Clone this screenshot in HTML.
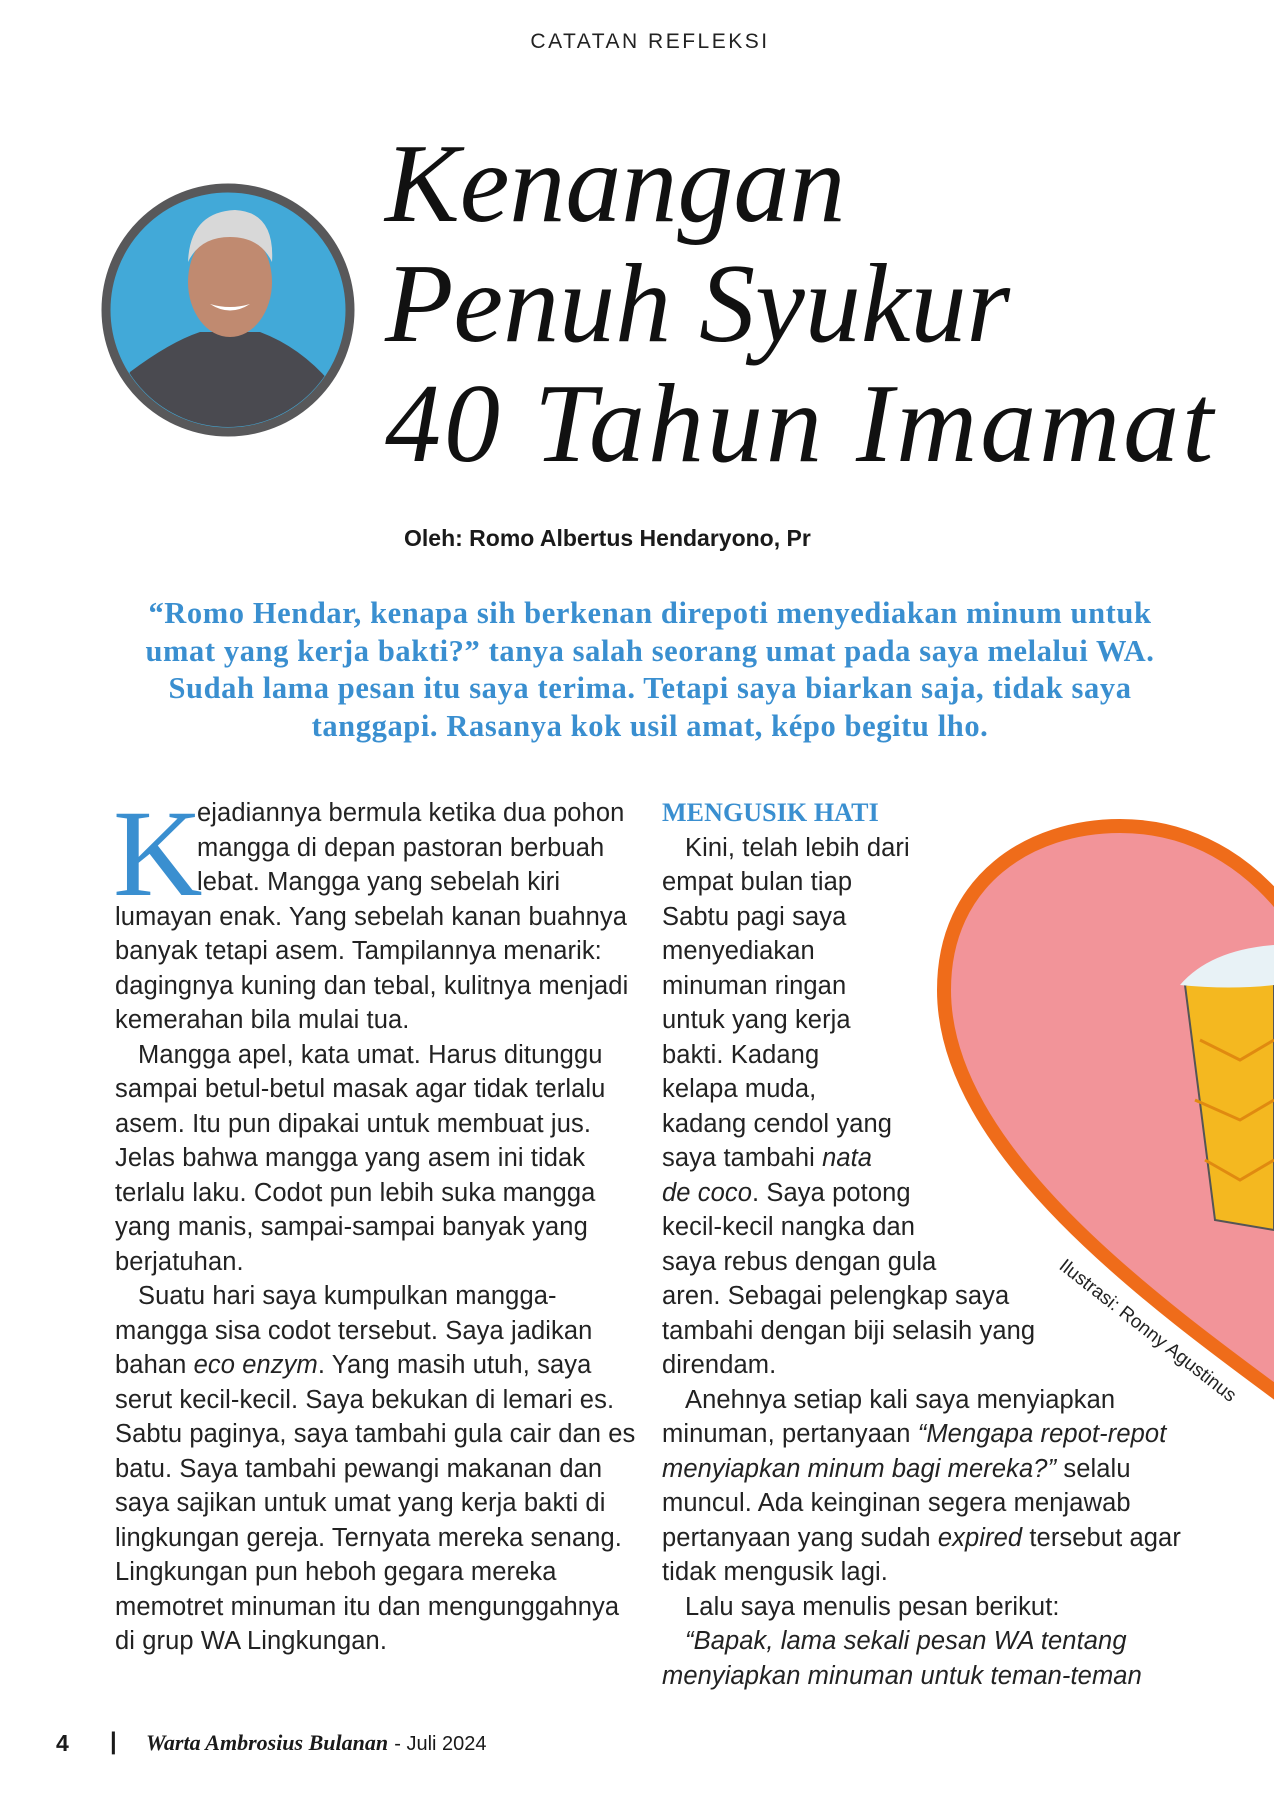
<!DOCTYPE html>
<html><head><meta charset="utf-8"><style>
*{margin:0;padding:0;box-sizing:border-box}
body{width:1274px;height:1800px;background:#fff;position:relative;overflow:hidden;font-family:"Liberation Sans",sans-serif;color:#1a1a1a}
.abs{position:absolute}
.hdr{top:30px;left:0;width:1300px;text-align:center;font-size:21px;letter-spacing:2.5px;color:#222}
.title{left:385px;font-family:"Liberation Serif",serif;font-style:italic;font-size:112px;line-height:1;color:#111;letter-spacing:0px;white-space:nowrap}
.by{top:525px;left:404px;font-size:23px;font-weight:bold}
.quote{top:595px;left:0;width:1300px;text-align:center;font-family:"Liberation Serif",serif;font-weight:bold;font-size:30.5px;letter-spacing:.6px;line-height:37.5px;color:#3a8fd0;white-space:nowrap}
.col{font-size:25.5px;letter-spacing:.1px;line-height:34.5px;color:#222;white-space:nowrap}
.in{padding-left:23px}
.dc{position:absolute;left:-2px;top:-4px;font-family:"Liberation Serif",serif;font-size:124px;line-height:1;color:#3a8fd0}
.h3{font-family:"Liberation Serif",serif;font-weight:bold;font-size:26px;color:#3a8fd0}
</style></head><body>
<div class="abs hdr">CATATAN REFLEKSI</div>

<svg class="abs" style="left:100px;top:182px" width="256" height="256">
<circle cx="128" cy="128" r="122" fill="#42a9d8" stroke="#58585a" stroke-width="9"/>
<clipPath id="c"><circle cx="128" cy="128" r="117"/></clipPath>
<g clip-path="url(#c)">
<path d="M10,256 L30,190 Q70,160 100,150 L160,150 Q200,165 230,200 L250,256Z" fill="#4a4a50"/>
<ellipse cx="130" cy="100" rx="42" ry="55" fill="#c08a70"/>
<path d="M88,80 Q90,30 135,28 Q175,30 172,80 Q160,55 130,55 Q100,55 88,80Z" fill="#d8d8d8"/>
<path d="M110,122 Q130,135 150,122 Q130,128 110,122Z" fill="#fff"/>
</g></svg>

<div class="abs title" style="top:128px">Kenangan</div>
<div class="abs title" style="top:248px">Penuh Syukur</div>
<div class="abs title" style="top:368px;letter-spacing:3px">40 Tahun Imamat</div>

<div class="abs by">Oleh: Romo Albertus Hendaryono, Pr</div>
<div class="abs quote">“Romo Hendar, kenapa sih berkenan direpoti menyediakan minum untuk<br>umat yang kerja bakti?” tanya salah seorang umat pada saya melalui WA.<br>Sudah lama pesan itu saya terima. Tetapi saya biarkan saja, tidak saya<br>tanggapi. Rasanya kok usil amat, képo begitu lho.</div>

<svg class="abs" style="left:0;top:0" width="1274" height="1800">
<path d="M1300,1410 C1150,1300 944,1150 944,990 C944,880 1030,826 1120,826 C1200,826 1260,870 1300,930Z" fill="#f29499" stroke="#ef6c1a" stroke-width="14"/>
<path d="M1185,985 L1274,965 L1274,1230 L1215,1220Z" fill="#f4b820" stroke="#555" stroke-width="2"/>
<path d="M1180,985 Q1210,950 1274,945 L1274,985 Q1230,990 1180,985Z" fill="#e8f2f6"/>
<path d="M1200,1040 L1240,1060 L1274,1040 M1195,1100 L1240,1120 L1274,1100 M1205,1160 L1240,1180 L1274,1160" stroke="#e08a10" stroke-width="3" fill="none"/>
<text x="1058" y="1268" transform="rotate(38 1058 1268)" font-family="Liberation Sans" font-size="19" fill="#222">Ilustrasi: Ronny Agustinus</text>
</svg>

<div class="abs col" style="left:115px;top:796px;width:520px">
<span class="dc">K</span>
<div style="padding-left:82px">ejadiannya bermula ketika dua pohon</div>
<div style="padding-left:82px">mangga di depan pastoran berbuah</div>
<div style="padding-left:82px">lebat. Mangga yang sebelah kiri</div>
<div>lumayan enak. Yang sebelah kanan buahnya</div>
<div>banyak tetapi asem. Tampilannya menarik:</div>
<div>dagingnya kuning dan tebal, kulitnya menjadi</div>
<div>kemerahan bila mulai tua.</div>
<div class="in">Mangga apel, kata umat. Harus ditunggu</div>
<div>sampai betul-betul masak agar tidak terlalu</div>
<div>asem. Itu pun dipakai untuk membuat jus.</div>
<div>Jelas bahwa mangga yang asem ini tidak</div>
<div>terlalu laku. Codot pun lebih suka mangga</div>
<div>yang manis, sampai-sampai banyak yang</div>
<div>berjatuhan.</div>
<div class="in">Suatu hari saya kumpulkan mangga-</div>
<div>mangga sisa codot tersebut. Saya jadikan</div>
<div>bahan <i>eco enzym</i>. Yang masih utuh, saya</div>
<div>serut kecil-kecil. Saya bekukan di lemari es.</div>
<div>Sabtu paginya, saya tambahi gula cair dan es</div>
<div>batu. Saya tambahi pewangi makanan dan</div>
<div>saya sajikan untuk umat yang kerja bakti di</div>
<div>lingkungan gereja. Ternyata mereka senang.</div>
<div>Lingkungan pun heboh gegara mereka</div>
<div>memotret minuman itu dan mengunggahnya</div>
<div>di grup WA Lingkungan.</div>
</div>

<div class="abs col" style="left:662px;top:796px;width:560px">
<div class="h3">MENGUSIK HATI</div>
<div class="in">Kini, telah lebih dari</div>
<div>empat bulan tiap</div>
<div>Sabtu pagi saya</div>
<div>menyediakan</div>
<div>minuman ringan</div>
<div>untuk yang kerja</div>
<div>bakti. Kadang</div>
<div>kelapa muda,</div>
<div>kadang cendol yang</div>
<div>saya tambahi <i>nata</i></div>
<div><i>de coco</i>. Saya potong</div>
<div>kecil-kecil nangka dan</div>
<div>saya rebus dengan gula</div>
<div>aren. Sebagai pelengkap saya</div>
<div>tambahi dengan biji selasih yang</div>
<div>direndam.</div>
<div class="in">Anehnya setiap kali saya menyiapkan</div>
<div>minuman, pertanyaan <i>“Mengapa repot-repot</i></div>
<div><i>menyiapkan minum bagi mereka?”</i> selalu</div>
<div>muncul. Ada keinginan segera menjawab</div>
<div>pertanyaan yang sudah <i>expired</i> tersebut agar</div>
<div>tidak mengusik lagi.</div>
<div class="in">Lalu saya menulis pesan berikut:</div>
<div class="in"><i>“Bapak, lama sekali pesan WA tentang</i></div>
<div><i>menyiapkan minuman untuk teman-teman</i></div>
</div>

<div class="abs" style="left:56px;top:1730px;font-size:23px;font-weight:bold">4</div>
<div class="abs" style="left:110px;top:1728px;font-size:24px;font-weight:bold">|</div>
<div class="abs" style="left:146px;top:1730px;font-size:22px;white-space:nowrap"><span style="font-family:'Liberation Serif',serif;font-weight:bold;font-style:italic">Warta Ambrosius Bulanan</span> <span style="font-size:20px">- Juli 2024</span></div>
</body></html>
